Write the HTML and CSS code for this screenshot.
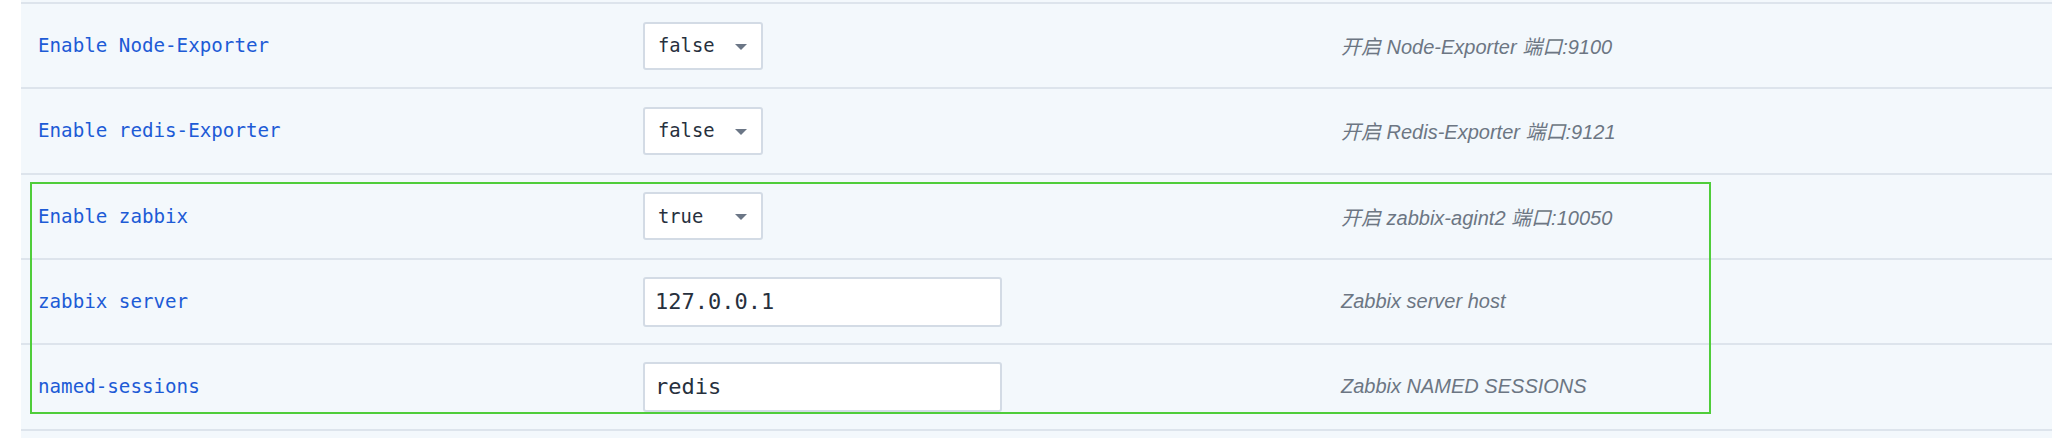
FILE: index.html
```html
<!DOCTYPE html>
<html>
<head>
<meta charset="utf-8">
<link rel="stylesheet" href="styles.css">
</head>
<body>
<div class="table">
  <div class="lead"></div>
  <div class="row">
    <div class="label">Enable Node-Exporter</div>
    <div class="control"><div class="select"><span>false</span><i class="caret"></i></div></div>
    <div class="desc">开启 Node-Exporter 端口:9100</div>
  </div>
  <div class="row">
    <div class="label">Enable redis-Exporter</div>
    <div class="control"><div class="select"><span>false</span><i class="caret"></i></div></div>
    <div class="desc">开启 Redis-Exporter 端口:9121</div>
  </div>
  <div class="row">
    <div class="label">Enable zabbix</div>
    <div class="control"><div class="select"><span>true</span><i class="caret"></i></div></div>
    <div class="desc">开启 zabbix-agint2 端口:10050</div>
  </div>
  <div class="row">
    <div class="label">zabbix server</div>
    <div class="control"><div class="input">127.0.0.1</div></div>
    <div class="desc">Zabbix server host</div>
  </div>
  <div class="row">
    <div class="label">named-sessions</div>
    <div class="control"><div class="input">redis</div></div>
    <div class="desc">Zabbix NAMED SESSIONS</div>
  </div>
  <div class="row tail"></div>
  <div class="highlight"></div>
</div>
</body>
</html>
```

FILE: styles.css
```css
html, body {
  margin: 0;
  padding: 0;
  background: #ffffff;
  overflow: hidden;
}

.table {
  position: relative;
  margin-left: 21px;
  width: 2031px;
  background: #f3f8fc;
}

.lead {
  height: 2px;
}

.row {
  box-sizing: border-box;
  height: 85.33px;
  border-top: 2px solid #dde4ec;
  display: grid;
  grid-template-columns: 605px 698px 1fr;
  align-items: center;
  padding-left: 17px;
}

.row.tail {
  height: 9.33px;
}

.label {
  font-family: "DejaVu Sans Mono", monospace;
  font-size: 19.2px;
  color: #1d5bd6;
  white-space: nowrap;
}

.select {
  box-sizing: border-box;
  width: 120px;
  height: 48px;
  background: #ffffff;
  border: 2px solid #d3dbe5;
  border-radius: 3px;
  display: flex;
  align-items: center;
  justify-content: space-between;
  padding: 0 14px 0 13px;
  font-family: "DejaVu Sans Mono", monospace;
  font-size: 18.8px;
  color: #27303d;
}

.caret {
  width: 0;
  height: 0;
  margin-top: 2px;
  border-left: 6px solid transparent;
  border-right: 6px solid transparent;
  border-top: 6px solid #6b7686;
}

.input {
  box-sizing: border-box;
  width: 359px;
  height: 50px;
  background: #ffffff;
  border: 2px solid #d3dbe5;
  border-radius: 3px;
  display: flex;
  align-items: center;
  padding: 0 10px;
  font-family: "DejaVu Sans Mono", monospace;
  font-size: 22px;
  color: #27303d;
}

.desc {
  font-family: "Liberation Sans", "Noto Sans CJK SC", sans-serif;
  font-style: italic;
  font-size: 20px;
  color: #6c7683;
  white-space: nowrap;
}

.highlight {
  position: absolute;
  left: 9px;
  top: 182px;
  width: 1681px;
  height: 232px;
  box-sizing: border-box;
  border: 2px solid #4fcd3a;
  pointer-events: none;
}
```
